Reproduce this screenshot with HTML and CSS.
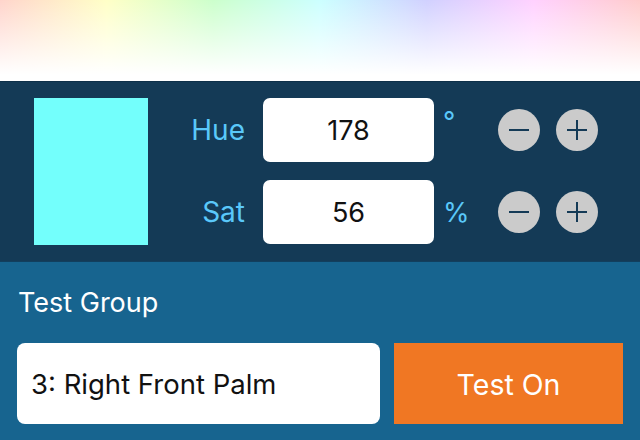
FILE: index.html
```html
<!DOCTYPE html>
<html lang="en">
<head>
    <meta charset="UTF-8">
    <meta name="viewport" content="width=device-width, initial-scale=1.0">
    <title>Color Test</title>
    <link rel="stylesheet" href="styles.css">
</head>
<body>

    <div class="spectrum"></div>

    <div class="panel">
        <div class="swatch"></div>

        <div class="controls">
            <div class="row">
                <span class="label">Hue</span>
                <div class="value">178</div>
                <span class="unit degree">°</span>
                <button class="step" aria-label="minus">
                    <svg width="42" height="42" viewBox="0 0 42 42"><path d="M11 21h20" stroke="#143a56" stroke-width="2"/></svg>
                </button>
                <button class="step" aria-label="plus">
                    <svg width="42" height="42" viewBox="0 0 42 42"><path d="M11 21h20M21 11v20" stroke="#143a56" stroke-width="2"/></svg>
                </button>
            </div>

            <div class="row">
                <span class="label">Sat</span>
                <div class="value">56</div>
                <span class="unit">%</span>
                <button class="step" aria-label="minus">
                    <svg width="42" height="42" viewBox="0 0 42 42"><path d="M11 21h20" stroke="#143a56" stroke-width="2"/></svg>
                </button>
                <button class="step" aria-label="plus">
                    <svg width="42" height="42" viewBox="0 0 42 42"><path d="M11 21h20M21 11v20" stroke="#143a56" stroke-width="2"/></svg>
                </button>
            </div>
        </div>
    </div>

    <div class="group">
        <div class="group-title">Test Group</div>
        <div class="group-row">
            <div class="group-select">3: Right Front Palm</div>
            <button class="test-btn">Test On</button>
        </div>
    </div>

</body>
</html>
```

FILE: styles.css
```css
body {
    margin: 0;
    width: 640px;
    height: 440px;
    overflow: hidden;
    font-family: Inter, "Liberation Sans", Arial, sans-serif;
    background-color: #17648f;
}

.spectrum {
    height: 81px;
    background:
        linear-gradient(to bottom, rgba(255, 255, 255, 0) 0%, #fff 92%),
        linear-gradient(to right,
            hsl(10, 100%, 90%),
            hsl(60, 100%, 89%),
            hsl(120, 100%, 90%),
            hsl(180, 100%, 90%),
            hsl(240, 100%, 91%),
            hsl(300, 100%, 91%),
            hsl(360, 100%, 90%));
}

.panel {
    display: flex;
    align-items: flex-start;
    height: 181px;
    box-sizing: border-box;
    padding: 16px 0 0 34px;
    background-color: #143a56;
    border-top: 1px solid #0e3049;
    border-bottom: 1px solid #123f5e;
}

.swatch {
    width: 114px;
    height: 147px;
    background-color: #73fffc;
}

.controls {
    display: flex;
    flex-direction: column;
    gap: 18px;
}

.row {
    display: flex;
    align-items: center;
    height: 64px;
}

.label {
    width: 97px;
    text-align: right;
    color: #5ac8fa;
    font-size: 28px;
}

.value {
    width: 171px;
    height: 64px;
    margin-left: 18px;
    display: flex;
    justify-content: center;
    align-items: center;
    background-color: white;
    border-radius: 7px;
    font-size: 27px;
    color: #111;
}

.unit {
    width: 64px;
    padding-left: 9px;
    box-sizing: border-box;
    color: #5ac8fa;
    font-size: 27px;
}

.degree {
    align-self: flex-start;
    margin-top: 7px;
}

.step {
    width: 42px;
    height: 42px;
    padding: 0;
    margin-right: 16px;
    border: none;
    border-radius: 50%;
    background-color: #cbcbcb;
    display: flex;
    justify-content: center;
    align-items: center;
}

.group {
    padding: 26px 17px 0 17px;
}

.group-title {
    color: white;
    font-size: 27px;
    line-height: 30px;
    padding-left: 1px;
}

.group-row {
    display: flex;
    gap: 14px;
    margin-top: 25px;
}

.group-select {
    width: 363px;
    height: 81px;
    box-sizing: border-box;
    padding-left: 14px;
    display: flex;
    align-items: center;
    background-color: white;
    border-radius: 8px;
    font-size: 27.5px;
    color: #111;
}

.test-btn {
    width: 229px;
    height: 81px;
    border: none;
    background-color: #f07723;
    color: white;
    font-family: inherit;
    font-size: 28.5px;
    padding-top: 2px;
}
```
